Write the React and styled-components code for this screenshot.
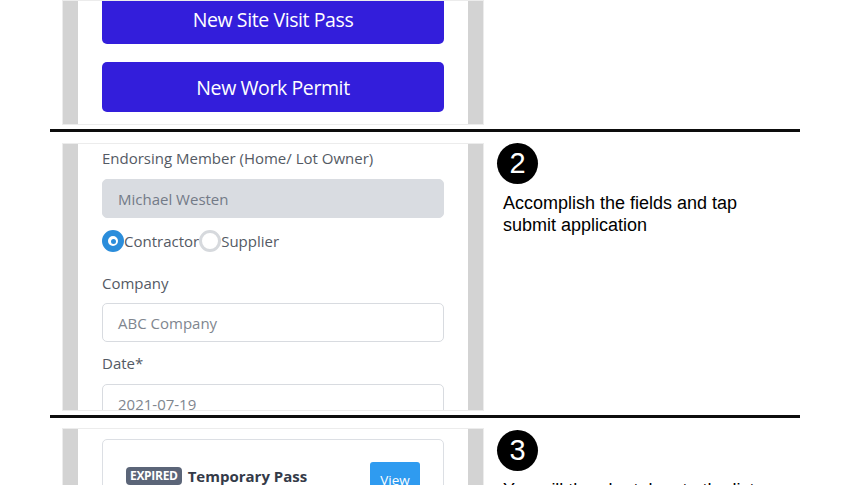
import React from "react";
import styled, { createGlobalStyle } from "styled-components";

const GlobalStyle = createGlobalStyle`
  html, body {
    margin: 0;
    padding: 0;
    background: #fff;
    overflow: hidden;
  }
  body {
    font-family: "Open Sans", "Noto Sans", sans-serif;
  }
`;

const Page = styled.div`
  width: 750px;
  margin-left: 50px;
  height: 485px;
  overflow: hidden;
  display: flex;
  flex-direction: column;
`;

const Section = styled.section`
  display: flex;
  flex-shrink: 0;
  height: ${(p) => p.$height}px;
  margin-top: ${(p) => p.$top || 0}px;
  padding-left: 12px;
`;

const Divider = styled.div`
  flex-shrink: 0;
  height: 3px;
  margin-top: 4px;
  background: #0d0d0d;
`;

const Phone = styled.div`
  width: 422px;
  height: 100%;
  box-sizing: border-box;
  display: flex;
  border: 1px solid #ececec;
  overflow: hidden;
`;

const Rail = styled.div`
  width: 15px;
  flex-shrink: 0;
  background: #d3d3d3;
`;

const Screen = styled.div`
  flex: 1;
  background: #fff;
  padding: ${(p) => p.$pad};
  display: flex;
  flex-direction: column;
  justify-content: ${(p) => (p.$bottom ? "flex-end" : "flex-start")};
  overflow: hidden;
`;

const PrimaryButton = styled.button`
  flex-shrink: 0;
  width: 342px;
  height: 50px;
  border: none;
  border-radius: 5px;
  background: #331edb;
  color: #fff;
  font-family: "Open Sans", sans-serif;
  font-size: 19.5px;
  letter-spacing: -0.4px;
  & + & {
    margin-top: 18px;
  }
`;

const Label = styled.div`
  flex-shrink: 0;
  font-size: 15px;
  line-height: 20px;
  color: #545a64;
  margin-top: ${(p) => p.$top || 0}px;
`;

const Field = styled.div`
  flex-shrink: 0;
  width: 342px;
  height: 39px;
  box-sizing: border-box;
  margin-top: ${(p) => p.$top || 0}px;
  padding-left: 15px;
  display: flex;
  align-items: center;
  border-radius: 5px;
  font-size: 15px;
  color: ${(p) => (p.$disabled ? "#737a87" : "#80868f")};
  background: ${(p) => (p.$disabled ? "#d9dce1" : "#fff")};
  border: 1px solid ${(p) => (p.$disabled ? "#d9dce1" : "#d8dbe0")};
`;

const RadioRow = styled.div`
  flex-shrink: 0;
  margin-top: 12px;
  display: flex;
  align-items: center;
  height: 22px;
  font-size: 15px;
  color: #545a64;
`;

const Radio = styled.span`
  width: 22px;
  height: 22px;
  box-sizing: border-box;
  border-radius: 50%;
  flex-shrink: 0;
  display: flex;
  align-items: center;
  justify-content: center;
  background: #fff;
  border: ${(p) => (p.$checked ? "6px solid #2b8ddb" : "3px solid #d6d9dd")};
  &::after {
    content: "";
    display: ${(p) => (p.$checked ? "block" : "none")};
    width: 5px;
    height: 5px;
    border-radius: 50%;
    background: #2b8ddb;
  }
`;

const Card = styled.div`
  flex-shrink: 0;
  width: 342px;
  height: 80px;
  box-sizing: border-box;
  border: 1px solid #dcdfe4;
  border-radius: 5px;
  padding: 22px 23px 0 23px;
  display: flex;
  align-items: flex-start;
  justify-content: space-between;
`;

const CardTitle = styled.div`
  display: flex;
  align-items: center;
  gap: 6px;
  margin-top: 4px;
  font-size: 15px;
  font-weight: 700;
  color: #343a48;
`;

const Badge = styled.span`
  background: #5b6578;
  color: #fff;
  font-size: 12px;
  font-weight: 700;
  letter-spacing: -0.3px;
  border-radius: 4px;
  padding: 1px 4px;
  line-height: 16px;
`;

const ViewButton = styled.button`
  width: 50px;
  height: 30px;
  border: none;
  border-radius: 3px;
  background: #2f9bf0;
  color: #fff;
  font-family: "Open Sans", sans-serif;
  font-size: 13.5px;
  padding-top: 6px;
`;

const Note = styled.div`
  padding-left: 13px;
  padding-top: ${(p) => p.$top || 0}px;
  font-family: "Liberation Sans", Arial, sans-serif;
  color: #000;
`;

const Step = styled.div`
  width: 41px;
  height: 41px;
  border-radius: 50%;
  background: #000;
  color: #fff;
  font-size: 29px;
  line-height: 41px;
  text-align: center;
`;

const NoteText = styled.p`
  margin: 8px 0 0 6px;
  font-size: 18px;
  line-height: 22px;
  width: 280px;
`;

export default function App() {
  return (
    <>
      <GlobalStyle />
      <Page>
        <Section $height={125}>
          <Phone>
            <Rail />
            <Screen $bottom $pad="0 23px 12px 24px">
              <PrimaryButton>New Site Visit Pass</PrimaryButton>
              <PrimaryButton>New Work Permit</PrimaryButton>
            </Screen>
            <Rail />
          </Phone>
        </Section>
        <Divider />
        <Section $height={268} $top={11}>
          <Phone>
            <Rail />
            <Screen $pad="4px 23px 0 24px">
              <Label>Endorsing Member (Home/ Lot Owner)</Label>
              <Field $disabled $top={11}>Michael Westen</Field>
              <RadioRow>
                <Radio $checked />
                Contractor
                <Radio />
                Supplier
              </RadioRow>
              <Label $top={21}>Company</Label>
              <Field $top={10}>ABC Company</Field>
              <Label $top={11}>Date*</Label>
              <Field $top={11}>2021-07-19</Field>
            </Screen>
            <Rail />
          </Phone>
          <Note>
            <Step>2</Step>
            <NoteText>Accomplish the fields and tap submit application</NoteText>
          </Note>
        </Section>
        <Divider />
        <Section $height={120} $top={10}>
          <Phone>
            <Rail />
            <Screen $pad="10px 23px 0 24px">
              <Card>
                <CardTitle>
                  <Badge>EXPIRED</Badge>
                  Temporary Pass
                </CardTitle>
                <ViewButton>View</ViewButton>
              </Card>
            </Screen>
            <Rail />
          </Phone>
          <Note $top={2}>
            <Step>3</Step>
            <NoteText>You will then be taken to the list</NoteText>
          </Note>
        </Section>
      </Page>
    </>
  );
}
